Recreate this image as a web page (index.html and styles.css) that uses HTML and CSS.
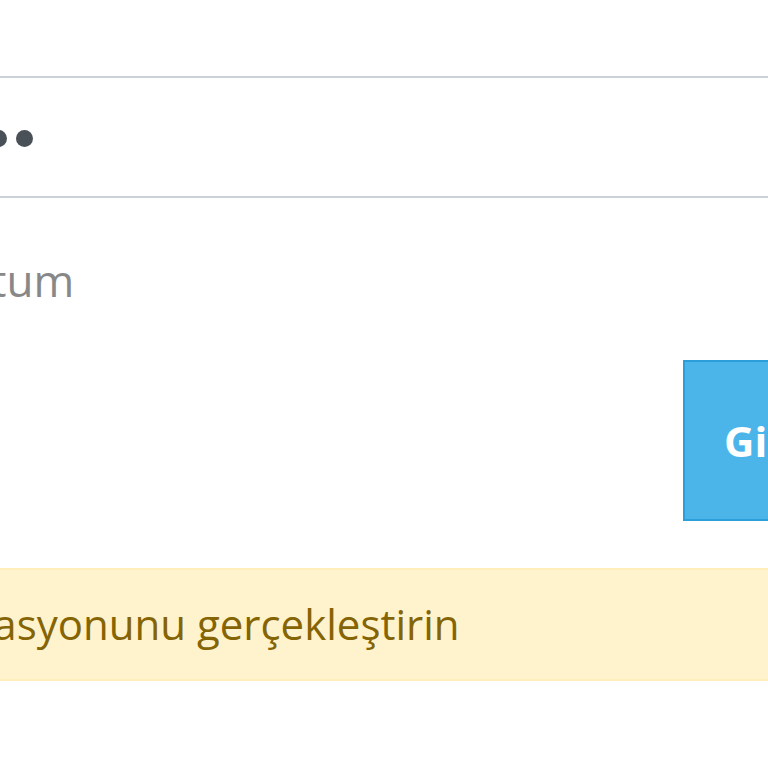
FILE: index.html
```html
<!DOCTYPE html>
<html lang="tr">
<head>
<meta charset="utf-8">
<title>Giriş</title>
<link rel="stylesheet" href="styles.css">
</head>
<body>
<main class="stage">
  <div class="pw-input" role="textbox" aria-label="Şifre">
    <span class="dot"></span><span class="dot"></span><span class="dot"></span><span class="dot"></span><span class="dot"></span><span class="dot"></span><span class="dot"></span><span class="dot"></span>
  </div>
  <div class="link-row"><a class="forgot" href="#">Şifremi Unuttum</a></div>
  <div class="btn-row"><button class="btn-login" type="button">Giriş Yap</button></div>
  <div class="alert">Lütfen hesap aktivasyonunu gerçekleştirin</div>
</main>
</body>
</html>
```
FILE: styles.css
```css
html, body {
  margin: 0;
  padding: 0;
  background: #ffffff;
  overflow: hidden;
}
body {
  font-family: "Open Sans", "Noto Sans", sans-serif;
  font-size: 42px;
  line-height: 1.5;
}
.stage {
  margin-left: -400px;
  width: 1600px;
  padding-top: 76px;
}
.pw-input {
  box-sizing: border-box;
  height: 122px;
  border: 2px solid #cad1d8;
  display: flex;
  align-items: center;
  gap: 9px;
  padding-left: 232px;
  padding-top: 3px;
}
.dot {
  width: 17px;
  height: 17px;
  border-radius: 50%;
  background: #495057;
}
.link-row {
  margin-top: 49px;
  padding-left: 133px;
  font-size: 44px;
}
.forgot {
  color: #888888;
  text-decoration: none;
}
.btn-row {
  margin-top: 47px;
  padding-left: 1083px;
}
.btn-login {
  box-sizing: border-box;
  height: 161px;
  padding: 0 39px;
  background: #4bb5ea;
  border: 2px solid #2c9ed9;
  color: #ffffff;
  font-family: "Open Sans", "Noto Sans", sans-serif;
  font-weight: 700;
  font-size: 42px;
  border-radius: 0;
}
.alert {
  margin-top: 47px;
  box-sizing: border-box;
  height: 113px;
  padding: 22px 0 0 33px;
  background: #fff3cd;
  border: 2px solid #ffeeba;
  color: #856404;
}
```
